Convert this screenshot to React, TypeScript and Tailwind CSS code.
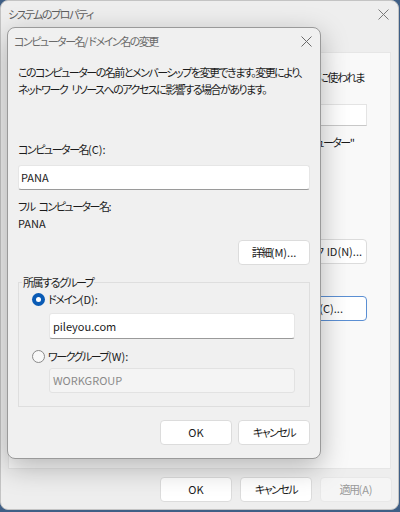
import React from "react";

const font = {
  fontFamily: '"Noto Sans CJK JP", "Noto Sans", sans-serif',
};

function CloseX({ color = "#5a5a5a" }: { color?: string }) {
  return (
    <svg width="11" height="11" viewBox="0 0 11 11">
      <path d="M0.5 0.5 L10.5 10.5 M10.5 0.5 L0.5 10.5" stroke={color} strokeWidth="1" />
    </svg>
  );
}

function L({ children }: { children: React.ReactNode }) {
  return <span className="tracking-normal">{children}</span>;
}

function Sp() {
  return <span className="inline-block w-[4px]" />;
}

function Btn({ children, className = "", disabled = false }: { children: React.ReactNode; className?: string; disabled?: boolean }) {
  return (
    <div
      className={
        "flex h-[25px] w-[72px] items-center justify-center rounded-[4px] border " +
        (disabled
          ? "border-[#e8e8e8] bg-[#f5f5f5] text-[#9a9a9a] "
          : "border-[#dcdcdc] bg-white text-[#1b1b1b] ") +
        className
      }
    >
      {children}
    </div>
  );
}

function Radio({ checked }: { checked: boolean }) {
  return checked ? (
    <div className="flex h-[13px] w-[13px] items-center justify-center rounded-full bg-[#0a5bb5]">
      <div className="h-[5px] w-[5px] rounded-full bg-white" />
    </div>
  ) : (
    <div className="h-[13px] w-[13px] rounded-full border border-[#8a8a8a] bg-[#f8f8f8]" />
  );
}

export default function App() {
  return (
    <div
      className="relative h-[512px] w-[400px] overflow-hidden whitespace-nowrap bg-[#3f5f86] text-[11px] leading-[17px] tracking-[-1.5px] text-[#1b1b1b]"
      style={{ ...font, fontFeatureSettings: '"palt"' }}
    >
      {/* Background window */}
      <div className="absolute left-0 top-0 flex h-[510px] w-[399px] flex-col rounded-b-[8px] rounded-t-[8px] border border-[#c4c4c4] bg-[#eeeeee]">
        <div className="flex h-[26px] items-center justify-between pl-[7px] pr-[9px]">
          <span className="text-[#606060]">システムのプロパティ</span>
          <CloseX color="#7a7a7a" />
        </div>
        <div className="mx-[7px] mt-[25px] flex h-[417px] flex-col items-end border border-[#e6e6e6] bg-[#f9f9f9] pr-[23px]">
          <div className="mt-[16px] pr-[3px]">に使われま</div>
          <div className="mt-[18px] h-[22px] w-[250px] border border-[#e4e4e4] border-b-[#c8c8c8] bg-white" />
          <div className="mt-[8px] pr-[12px]">
            ューター<L>"</L>
          </div>
          <div className="mt-[88px] flex h-[25px] w-[120px] items-center justify-end rounded-[4px] border border-[#dcdcdc] bg-white pr-[4px]">
            ク<Sp />
            <L>ID(N)...</L>
          </div>
          <div className="mt-[32px] flex h-[25px] w-[90px] items-center justify-end rounded-[4px] border border-[#5b8fd3] bg-white pr-[23px]">
            更<L>(C)...</L>
          </div>
        </div>
        <div className="mt-[8px] flex justify-end gap-[8px] pr-[6px]">
          <Btn className="tracking-normal">OK</Btn>
          <Btn>キャンセル</Btn>
          <Btn disabled>
            適用<L>(A)</L>
          </Btn>
        </div>
      </div>

      {/* Front dialog */}
      <div className="absolute left-[7px] top-[27px] flex h-[432px] w-[314px] flex-col overflow-hidden rounded-[8px] border border-[#9a9a9a] bg-[#f0f0f0] shadow-[0_8px_28px_rgba(0,0,0,0.28)]">
        <div className="flex h-[26px] items-center justify-between pl-[6px] pr-[8px]">
          <span className="text-[#6a6a6a]">
            コンピューター名<L>/</L>ドメイン名の変更
          </span>
          <CloseX color="#6a6a6a" />
        </div>
        <div className="flex flex-col px-[10px]">
          <div className="mt-[10px]">
            <div>このコンピューターの名前とメンバーシップを変更できます。変更により、</div>
            <div>
              ネットワーク<Sp />
              リソースへのアクセスに影響する場合があります。
            </div>
          </div>
          <div className="mt-[43px]">
            コンピューター名<L>(C):</L>
          </div>
          <div className="mt-[7px] flex h-[25px] items-center rounded-[3px] border border-[#e6e6e6] border-b-[#9a9a9a] bg-white pl-[2px] tracking-normal">
            PANA
          </div>
          <div className="mt-[8px]">
            フル<Sp />
            コンピューター名<L>:</L>
          </div>
          <div className="tracking-normal">PANA</div>
          <Btn className="mt-[8px] self-end">
            詳細<L>(M)...</L>
          </Btn>
          <fieldset className="mt-[9px] border border-[#dedede] p-0 pb-[13px]">
            <legend className="ml-[3px] px-[1px]">所属するグループ</legend>
            <div className="flex items-center gap-[3px] pl-[13px]">
              <Radio checked />
              <span>
                ドメイン<L>(D):</L>
              </span>
            </div>
            <div className="ml-[30px] mr-[14px] mt-[5px] flex h-[26px] items-center rounded-[3px] border border-[#e6e6e6] border-b-[#9a9a9a] bg-white pl-[3px] tracking-normal">
              pileyou.com
            </div>
            <div className="mt-[9px] flex items-center gap-[3px] pl-[13px]">
              <Radio checked={false} />
              <span>
                ワークグループ<L>(W):</L>
              </span>
            </div>
            <div className="ml-[30px] mr-[14px] mt-[3px] flex h-[25px] items-center rounded-[3px] border border-[#e2e2e2] bg-[#f4f4f4] pl-[3px] tracking-normal text-[#8a8a8a]">
              WORKGROUP
            </div>
          </fieldset>
          <div className="mt-[13px] flex justify-end gap-[6px]">
            <Btn className="tracking-normal">OK</Btn>
            <Btn>キャンセル</Btn>
          </div>
        </div>
      </div>
    </div>
  );
}
